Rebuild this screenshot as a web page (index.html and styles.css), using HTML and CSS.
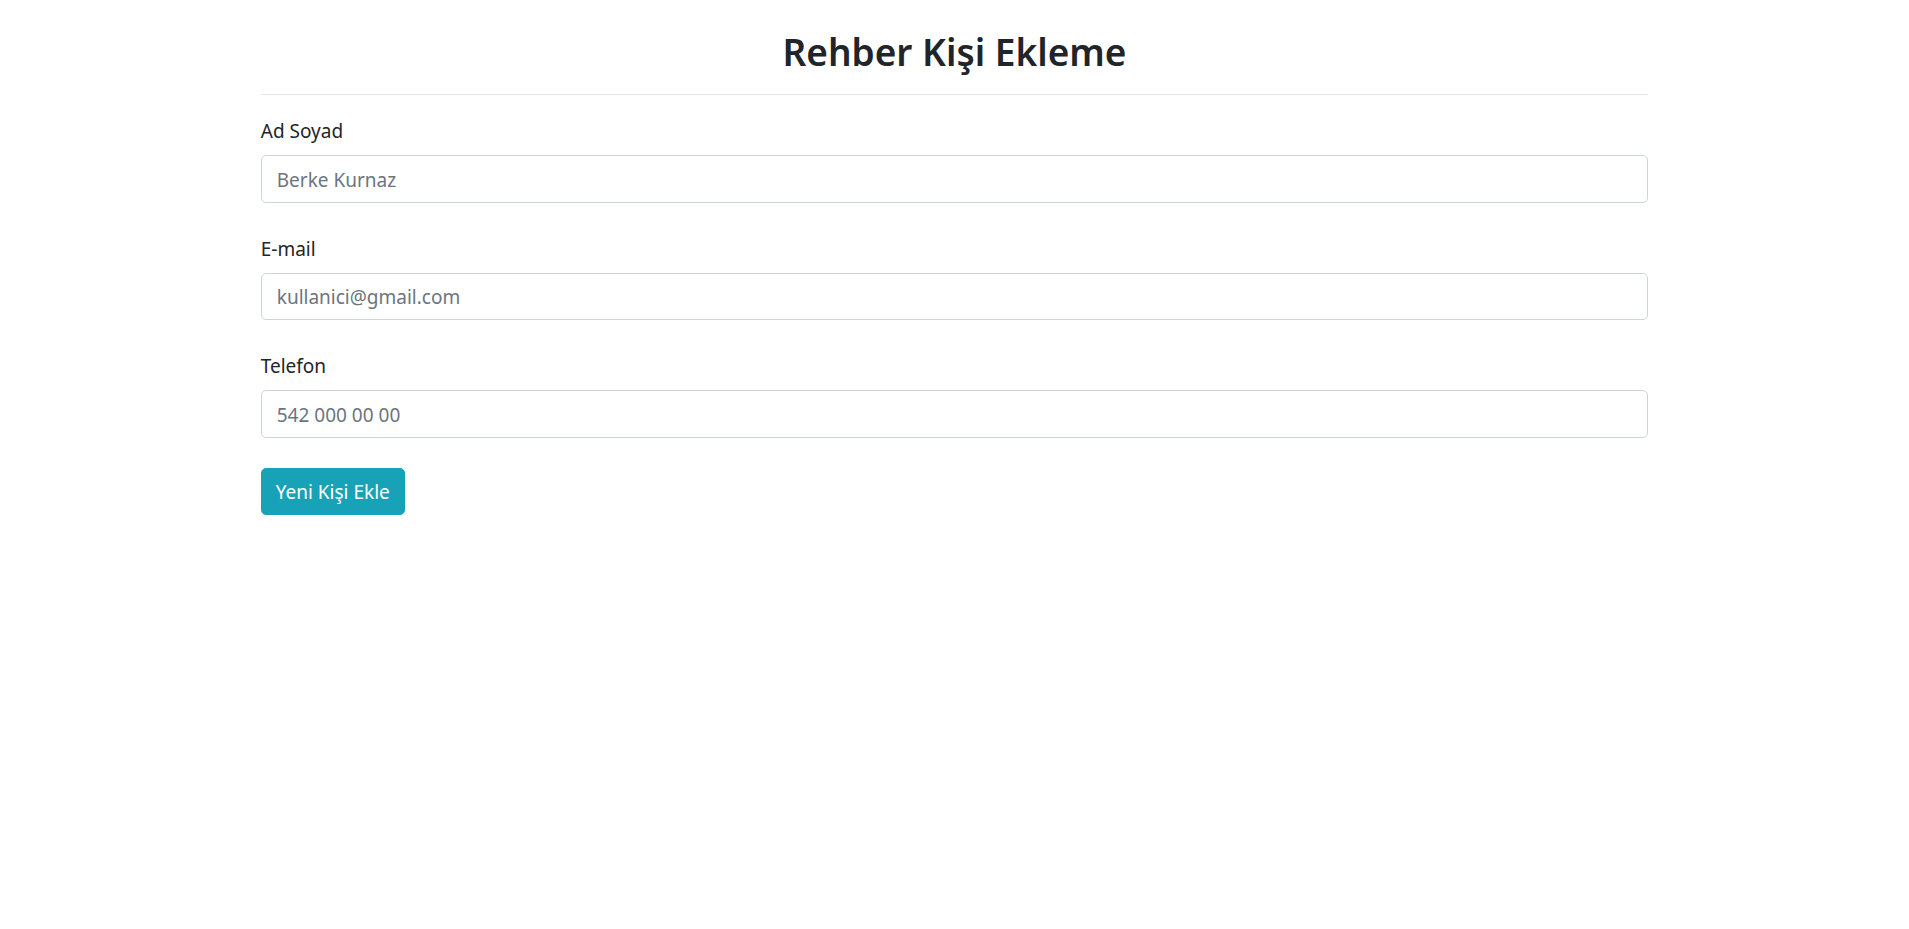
FILE: index.html
```html
<!DOCTYPE html>
<html lang="tr">
<head>
<meta charset="utf-8">
<title>Rehber Kişi Ekleme</title>
<link rel="stylesheet" href="styles.css">
</head>
<body>
<div class="container">
  <h2 class="title">Rehber Kişi Ekleme</h2>
  <hr class="divider">
  <form class="form">
    <div class="form-group">
      <label class="label" for="ad">Ad Soyad</label>
      <input class="input" id="ad" type="text" placeholder="Berke Kurnaz">
    </div>
    <div class="form-group">
      <label class="label" for="mail">E-mail</label>
      <input class="input" id="mail" type="email" placeholder="kullanici@gmail.com">
    </div>
    <div class="form-group">
      <label class="label" for="tel">Telefon</label>
      <input class="input" id="tel" type="text" placeholder="542 000 00 00">
    </div>
    <button class="btn" type="button">Yeni Kişi Ekle</button>
  </form>
</div>
</body>
</html>
```
FILE: styles.css
```css
* { box-sizing: border-box; }
html, body { margin: 0; padding: 0; background: #fff; }
body {
  font-family: "Noto Sans", "Open Sans", sans-serif;
  font-size: 19px;
  line-height: 30px;
  color: #212529;
}
.container {
  width: 1387.5px;
  margin: 0 auto;
}
.title {
  margin: 28px 0 18px;
  font-size: 37px;
  line-height: 48px;
  font-weight: 600;
  text-align: center;
}
.divider {
  margin: 0 0 20px;
  border: 0;
  border-top: 1px solid rgba(0,0,0,.1);
  height: 0;
}
.form-group { margin-bottom: 30px; }
.label {
  display: block;
  margin-bottom: 10px;
  padding-top: 2px;
  line-height: 28px;
}
.input {
  display: block;
  width: 100%;
  height: 47.5px;
  padding: 8.5px 15px 6.5px;
  font: inherit;
  color: #495057;
  background: #fff;
  border: 1px solid #ced4da;
  border-radius: 5px;
  outline: none;
}
.input::placeholder { color: #6c757d; opacity: 1; }
.btn {
  display: inline-block;
  padding: 8.5px 14px 6.5px;
  font: inherit;
  color: #fff;
  background: #17a2b8;
  border: 1px solid #17a2b8;
  border-radius: 5px;
  cursor: pointer;
}
```
